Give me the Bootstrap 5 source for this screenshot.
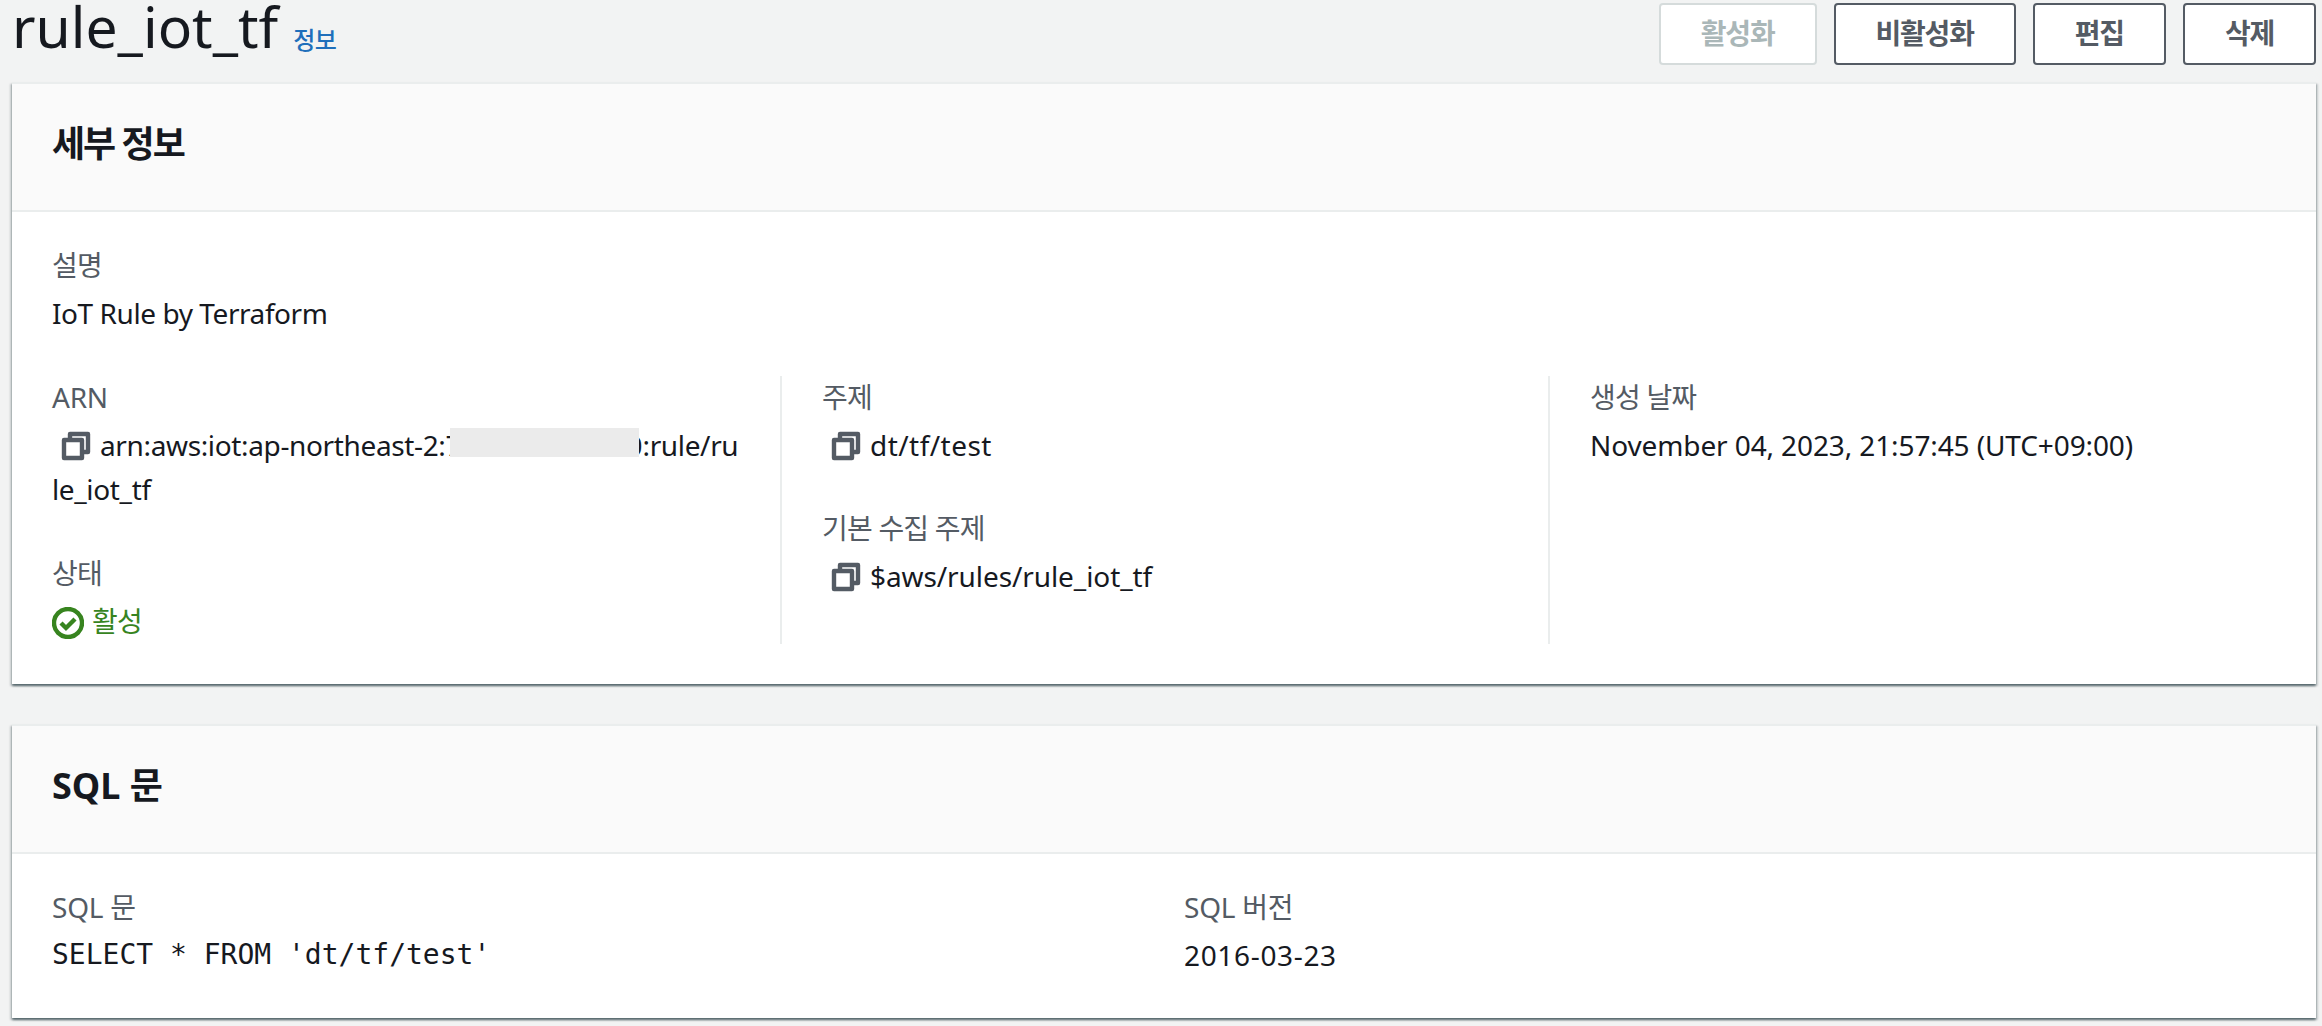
<!DOCTYPE html>
<html lang="ko">
<head>
<meta charset="utf-8">
<title>rule_iot_tf</title>
<link href="https://cdn.jsdelivr.net/npm/bootstrap@5.3.0/dist/css/bootstrap.min.css" rel="stylesheet">
<style>
html,body{height:100%;overflow:hidden}
body{background:#f2f3f3;color:#16191f;font:400 28px/44px "Noto Sans","Noto Sans CJK KR",sans-serif;letter-spacing:-.22px}
.page-wrap{padding:0 6px 0 12px}
.title-bar{height:82px}
.btn-group-gap{gap:17px}
.rule-title{font-size:57px;line-height:56px;font-weight:400;margin:-2px 0 0;letter-spacing:0}
.info-link{font-size:24px;line-height:32px;font-weight:500;color:#1f6fbb;text-decoration:none;margin-left:15px;padding-top:24px;letter-spacing:-.6px}
.act-btn{font-size:28px;line-height:42px;font-weight:700;color:#545b64;background:#fff;border:2px solid #545b64;border-radius:4px;padding:7px 40px 9px;margin-top:3px;letter-spacing:-1.2px}
.act-btn:disabled{color:#aab7b8;border-color:#d5dbdb;background:#fff;opacity:1}
.panel{border:0;border-top:2px solid #eaeded;border-radius:0;background:#fff;box-shadow:0 2px 2px 0 rgba(0,28,36,.5),2px 2px 2px 0 rgba(0,28,36,.15),-2px 2px 2px 0 rgba(0,28,36,.15)}
.panel+.panel{margin-top:40px}
.panel-head{background:#fafafa;border-bottom:2px solid #eaeded;padding:36px 40px 42px;border-radius:0}
.panel-head h2{font-size:36px;line-height:48px;font-weight:700;margin:0;letter-spacing:0}
.panel-head h2.head-ko{letter-spacing:-2px}
.panel-intro{padding:31px 40px 41px}
.field-label{color:#545b64;margin-bottom:4px}
.lab-ko{letter-spacing:-.8px}
.field-block{margin-top:-1px}
.field-block+.field-block{margin-top:39px}
.field-block+.status-block{margin-top:40px}
.divided+.divided{border-left:2px solid #eaeded}
.divided{padding:0 40px}
.divided-row{margin:0 0 40px}
.copy-val{word-break:break-all;letter-spacing:-.36px}
.copy-icon{width:32px;height:32px;margin:0 8px;vertical-align:-6px;fill:none;stroke:#545b64;stroke-width:2.2;stroke-linejoin:round}
.acct-sliver{display:inline-block;width:4px;height:44px;overflow:hidden;vertical-align:-11px;white-space:nowrap}
.acct-sliver-end{text-indent:-12px}
.acct-mask{display:inline-block;width:189px;height:29px;vertical-align:-1px;background:#ebebeb}
.status-ok{color:#37841f;padding-bottom:1px}
.status-icon{width:32px;height:32px;margin-right:8px;vertical-align:-7px;fill:none;stroke:#37841f;stroke-width:2.2}
.sql-body{padding:31px 40px 41px}
.sql-code{font-family:"DejaVu Sans Mono",monospace;font-size:28px;letter-spacing:0}
.sql-right{padding-left:20px}
.fit-iot{letter-spacing:-.43px}
.fit-topic{letter-spacing:.45px}
.fit-path{letter-spacing:-.09px}
.fit-date{letter-spacing:-.11px}
.fit-ver{letter-spacing:.66px}
</style>
</head>
<body>
<div class="page-wrap">
  <div class="title-bar d-flex justify-content-between align-items-start">
    <div class="d-flex align-items-start">
      <h1 class="rule-title">rule_iot_tf</h1>
      <a class="info-link" href="#">정보</a>
    </div>
    <div class="d-flex btn-group-gap">
      <button type="button" class="btn act-btn" disabled>활성화</button>
      <button type="button" class="btn act-btn">비활성화</button>
      <button type="button" class="btn act-btn">편집</button>
      <button type="button" class="btn act-btn">삭제</button>
    </div>
  </div>

  <div class="card panel">
    <div class="panel-head"><h2 class="head-ko">세부 정보</h2></div>
    <div class="panel-intro">
      <div class="field-label lab-ko">설명</div>
      <div class="fit-iot">IoT Rule by Terraform</div>
    </div>
    <div class="row g-0 divided-row">
      <div class="col-4 divided">
        <div class="field-block">
          <div class="field-label">ARN</div>
          <div class="copy-val"><svg class="copy-icon" viewBox="0 0 16 16"><path d="M2 5h9v9H2z"/><path d="M5 5V2h9v9h-3"/></svg>arn:aws:iot:ap-northeast-2:<span class="acct-sliver">7</span><span class="acct-mask"></span><span class="acct-sliver acct-sliver-end">0</span>:rule/rule_iot_tf</div>
        </div>
        <div class="field-block status-block">
          <div class="field-label lab-ko">상태</div>
          <div class="status-ok"><svg class="status-icon" viewBox="0 0 16 16"><circle cx="8" cy="8" r="7"/><path d="M4.5 8l2.5 2.5 4.5-4.5"/></svg><span class="lab-ko">활성</span></div>
        </div>
      </div>
      <div class="col-4 divided">
        <div class="field-block">
          <div class="field-label lab-ko">주제</div>
          <div><svg class="copy-icon" viewBox="0 0 16 16"><path d="M2 5h9v9H2z"/><path d="M5 5V2h9v9h-3"/></svg><span class="fit-topic">dt/tf/test</span></div>
        </div>
        <div class="field-block">
          <div class="field-label lab-ko">기본 수집 주제</div>
          <div><svg class="copy-icon" viewBox="0 0 16 16"><path d="M2 5h9v9H2z"/><path d="M5 5V2h9v9h-3"/></svg><span class="fit-path">$aws/rules/rule_iot_tf</span></div>
        </div>
      </div>
      <div class="col-4 divided">
        <div class="field-block">
          <div class="field-label lab-ko">생성 날짜</div>
          <div class="fit-date">November 04, 2023, 21:57:45 (UTC+09:00)</div>
        </div>
      </div>
    </div>
  </div>

  <div class="card panel">
    <div class="panel-head"><h2>SQL 문</h2></div>
    <div class="sql-body">
      <div class="row g-0">
        <div class="col-6">
          <div class="field-label">SQL 문</div>
          <div class="sql-code">SELECT * FROM 'dt/tf/test'</div>
        </div>
        <div class="col-6 sql-right">
          <div class="field-label">SQL 버전</div>
          <div class="fit-ver">2016-03-23</div>
        </div>
      </div>
    </div>
  </div>
</div>
<script src="https://cdn.jsdelivr.net/npm/bootstrap@5.3.0/dist/js/bootstrap.bundle.min.js"></script>
</body>
</html>
